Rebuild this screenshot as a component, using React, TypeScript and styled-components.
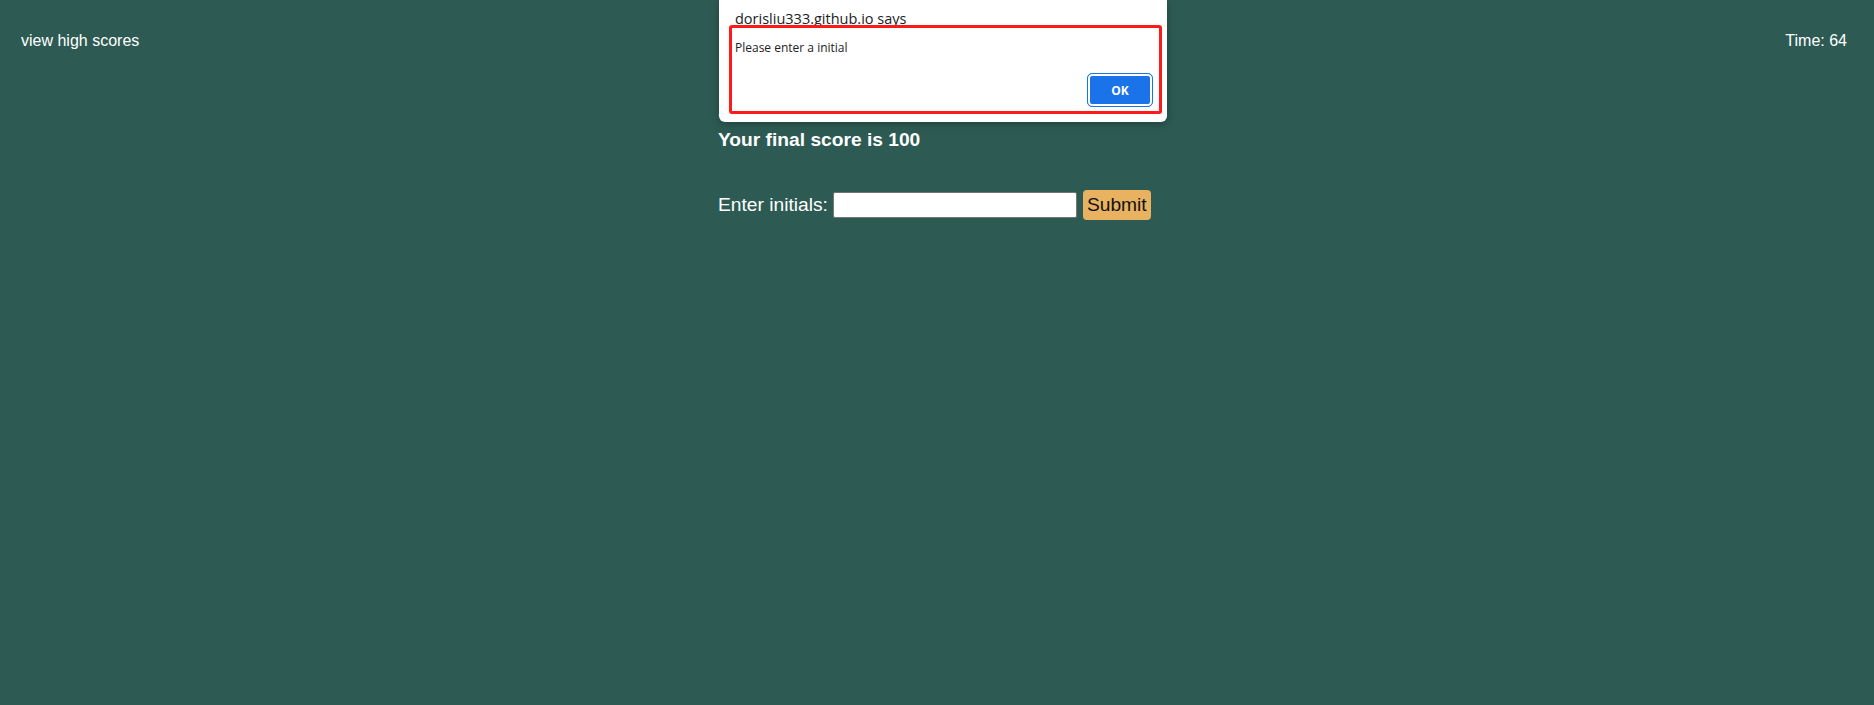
import React from "react";
import styled, { createGlobalStyle } from "styled-components";

const GlobalStyle = createGlobalStyle`
  body {
    margin: 0;
    background: #2d5b54;
    font-family: "Liberation Sans", Arial, sans-serif;
    color: #ffffff;
  }
`;

const App = () => {
  return (
    <Page>
      <GlobalStyle />
      <Header>
        <HighScoresLink>view high scores</HighScoresLink>
        <Timer>Time: 64</Timer>
      </Header>
      <Main>
        <Heading>All done!</Heading>
        <Score>Your final score is 100</Score>
        <Form onSubmit={(e) => e.preventDefault()}>
          <Label htmlFor="initials">Enter initials:</Label>
          <Input id="initials" type="text" />
          <SubmitButton type="submit">Submit</SubmitButton>
        </Form>
      </Main>
      <Alert>
        <AlertTitle>dorisliu333.github.io says</AlertTitle>
        <AlertMessage>Please enter a initial</AlertMessage>
        <AlertActions>
          <OkButton>OK</OkButton>
        </AlertActions>
        <Highlight />
      </Alert>
    </Page>
  );
};

const Page = styled.div`
  position: relative;
  min-height: 705px;
`;

const Header = styled.header`
  display: flex;
  justify-content: space-between;
  align-items: center;
  padding: 32px 27px 0 21px;
  font-size: 16px;
`;

const HighScoresLink = styled.div`
  cursor: pointer;
`;

const Timer = styled.div``;

const Main = styled.main`
  width: 438px;
  margin: 0 auto;
`;

const Heading = styled.h2`
  margin: 44px 0 0;
  font-size: 24px;
  font-weight: bold;
`;

const Score = styled.p`
  margin: 7px 0 0;
  font-size: 19.2px;
  font-weight: bold;
`;

const Form = styled.form`
  display: flex;
  align-items: center;
  margin-top: 39px;
`;

const Label = styled.label`
  font-size: 19.2px;
  margin-right: 5px;
`;

const Input = styled.input`
  box-sizing: border-box;
  width: 244px;
  height: 26px;
  border: 1px solid #767676;
  border-radius: 2px;
  background: #ffffff;
  margin: 0 6px 0 0;
`;

const SubmitButton = styled.button`
  box-sizing: border-box;
  height: 30px;
  width: 68px;
  padding: 0;
  border: none;
  border-radius: 4px;
  background: #e8b261;
  color: #111111;
  font-family: "Liberation Sans", Arial, sans-serif;
  font-size: 19.2px;
  cursor: pointer;
`;

const Alert = styled.div`
  position: absolute;
  top: 0;
  left: 50%;
  margin-left: -218px;
  width: 448px;
  height: 122px;
  box-sizing: border-box;
  padding: 10px 14px 15px 16px;
  background: #ffffff;
  border-radius: 0 0 6px 6px;
  box-shadow: 0 2px 8px rgba(0, 0, 0, 0.3);
  color: #202124;
  font-family: "Open Sans", "Noto Sans", sans-serif;
  display: flex;
  flex-direction: column;
`;

const AlertTitle = styled.div`
  font-size: 14.5px;
  line-height: 18px;
`;

const AlertMessage = styled.div`
  margin-top: 12px;
  font-size: 12px;
  line-height: 16px;
`;

const AlertActions = styled.div`
  margin-top: auto;
  display: flex;
  justify-content: flex-end;
`;

const OkButton = styled.button`
  width: 66px;
  height: 34px;
  border: 1px solid #1a73e8;
  border-radius: 5px;
  background: #1a73e8;
  box-shadow: inset 0 0 0 2px #ffffff;
  color: #ffffff;
  font-family: "Open Sans", "Noto Sans", sans-serif;
  font-size: 12px;
  font-weight: bold;
  cursor: pointer;
`;

const Highlight = styled.div`
  position: absolute;
  left: 10px;
  top: 25px;
  width: 433px;
  height: 89px;
  box-sizing: border-box;
  border: 3px solid #ff1a1a;
  border-radius: 3px;
  pointer-events: none;
`;

export default App;
